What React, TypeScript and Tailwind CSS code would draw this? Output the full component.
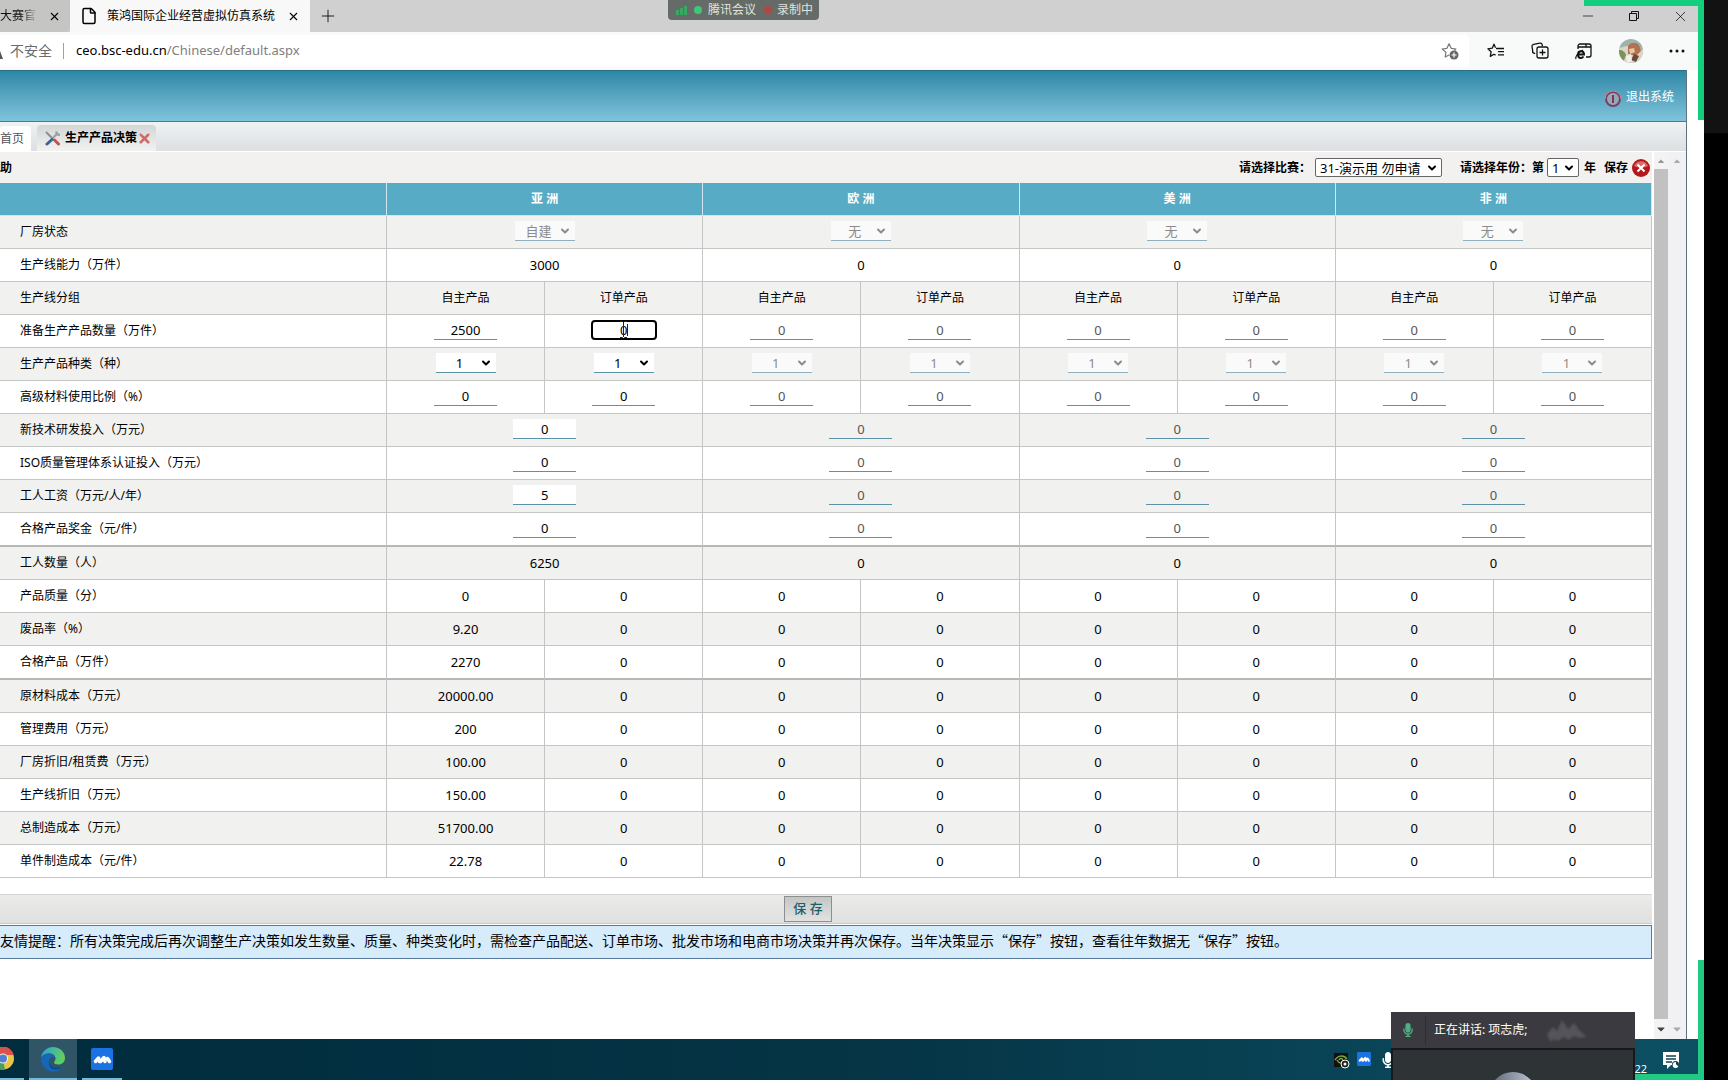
import React from "react"
import { ChevronDown, File, Minus, Plus, X } from "lucide-react"
import { FaCaretDown, FaCaretUp, FaMicrophone } from "react-icons/fa"

type Kind = "text" | "input" | "select"

interface Row {
  label: string
  kind: Kind
  values: string[]
  thick?: boolean
}

const regions = ["亚 洲", "欧 洲", "美 洲", "非 洲"]

const groups = ["自主产品", "订单产品"]

// only the first line of the first region is in use
const split = (first: string) => [first, "0", "0", "0", "0", "0", "0", "0"]

const rows: Row[] = [
  { label: "厂房状态", kind: "select", values: ["自建", "无", "无", "无"] },
  { label: "生产线能力（万件）", kind: "text", values: ["3000", "0", "0", "0"] },
  {
    label: "生产线分组",
    kind: "text",
    values: [...groups, ...groups, ...groups, ...groups],
  },
  { label: "准备生产产品数量（万件）", kind: "input", values: split("2500") },
  {
    label: "生产产品种类（种）",
    kind: "select",
    values: ["1", "1", "1", "1", "1", "1", "1", "1"],
  },
  { label: "高级材料使用比例（%）", kind: "input", values: split("0") },
  { label: "新技术研发投入（万元）", kind: "input", values: ["0", "0", "0", "0"] },
  {
    label: "ISO质量管理体系认证投入（万元）",
    kind: "input",
    values: ["0", "0", "0", "0"],
  },
  { label: "工人工资（万元/人/年）", kind: "input", values: ["5", "0", "0", "0"] },
  {
    label: "合格产品奖金（元/件）",
    kind: "input",
    values: ["0", "0", "0", "0"],
    thick: true,
  },
  { label: "工人数量（人）", kind: "text", values: ["6250", "0", "0", "0"] },
  { label: "产品质量（分）", kind: "text", values: split("0") },
  { label: "废品率（%）", kind: "text", values: split("9.20") },
  { label: "合格产品（万件）", kind: "text", values: split("2270"), thick: true },
  { label: "原材料成本（万元）", kind: "text", values: split("20000.00") },
  { label: "管理费用（万元）", kind: "text", values: split("200") },
  { label: "厂房折旧/租赁费（万元）", kind: "text", values: split("100.00") },
  { label: "生产线折旧（万元）", kind: "text", values: split("150.00") },
  { label: "总制造成本（万元）", kind: "text", values: split("51700.00") },
  { label: "单件制造成本（元/件）", kind: "text", values: split("22.78") },
]

const BrowserTabs = () => (
  <div className="flex h-8 items-stretch bg-[#cfd0cf]">
    <div className="flex w-[70px] items-center justify-between rounded-br bg-[#c5c6c4] pr-[9px]">
      <span className="bg-linear-to-r from-[#111] from-60% to-[#b4b4b4] bg-clip-text text-xs whitespace-nowrap text-transparent">
        大赛官
      </span>
      <button aria-label="关闭标签页">
        <X size={13} strokeWidth={2} />
      </button>
    </div>
    <div className="flex w-60 items-center bg-[#f7f8f7] pr-[10px] pl-[10px]">
      <File size={18} strokeWidth={2} />
      <span className="ml-[9px] grow text-xs whitespace-nowrap">
        策鸿国际企业经营虚拟仿真系统
      </span>
      <button aria-label="关闭标签页">
        <X size={13} strokeWidth={2} />
      </button>
    </div>
    <button aria-label="新建标签页" className="px-2">
      <Plus size={20} strokeWidth={1} />
    </button>
    <div className="ml-auto flex items-center gap-[30px] pr-[15px]">
      <button aria-label="最小化">
        <Minus size={16} strokeWidth={1} />
      </button>
      <button aria-label="还原">
        <svg width="16" height="16" viewBox="0 0 16 16" fill="none" stroke="#111">
          <path d="M3.5 5.5h7v7h-7zM5.5 5.5v-2h7v7h-2" />
        </svg>
      </button>
      <button aria-label="关闭">
        <X size={17} strokeWidth={1} />
      </button>
    </div>
  </div>
)

const BrowserActions = () => (
  <div className="flex items-center gap-[26px] pr-[19px] pl-[18px]">
    <button aria-label="收藏夹">
      <svg width="18" height="18" viewBox="0 0 18 18" fill="none" stroke="#111">
        <path
          strokeWidth="1.3"
          strokeLinejoin="round"
          d="M8.5 5.8 7 2.2 5.2 6.2.9 6.8l3.2 3-.8 4.6L7 12.2l1.6.9M9 6.5h8M11 9.7h6M11 12.9h6"
        />
      </svg>
    </button>
    <button aria-label="集锦">
      <svg width="18" height="18" viewBox="0 0 18 18" fill="none" stroke="#111">
        <path
          strokeWidth="1.3"
          d="M4.2 11.6 3 11.2a2 2 0 0 1-1.3-2.4L1 4.5a2 2 0 0 1 1.6-2.2L9 1.2a2 2 0 0 1 2.2 1.6l.2 1.4"
        />
        <rect x="6" y="5" width="11" height="11" rx="2" strokeWidth="1.3" />
        <path strokeWidth="1.3" d="M11.5 7.5v6M8.5 10.5h6" />
      </svg>
    </button>
    <button aria-label="Internet Explorer 模式">
      <svg width="18" height="18" viewBox="0 0 18 18" fill="none" stroke="#111">
        <path
          strokeWidth="1.3"
          d="M3 7V4a2 2 0 0 1 2-2h9a2 2 0 0 1 2 2v9a2 2 0 0 1-2 2h-3M3 5h13M11 2v3"
        />
        <path strokeWidth="2" d="M3 12.5h6c0-4.5-6-4.500-6 0s4 4 5.500 2" />
        <path strokeWidth="1.2" d="M1 17c-1-2 2-7 7-9" />
      </svg>
    </button>
    <button aria-label="个人资料" className="size-6 overflow-hidden rounded-full">
      <svg width="24" height="24" viewBox="0 0 24 24">
        <path fill="#9fb3ae" d="M0 0h24v24H0z" />
        <path fill="#d9d6c8" d="M0 9l8-2 6 3 10 1v13H0z" />
        <path fill="#7d9258" d="M0 11c4 0 6 2 7 5l-3 8H0z" />
        <path fill="#b5714d" d="M9 7c3-4 8-4 11-1l2 6-5 5-8-2z" />
        <path fill="#e7c6a4" d="M10 10l5-1 1 4-5 2z" />
        <path fill="#6b4a3c" d="M15 15l5 2-3 6-5-2z" />
        <path fill="#f1efe9" d="M7 17l5-2 1 7-5 2z" />
      </svg>
    </button>
    <button aria-label="设置及其他">
      <svg width="16" height="4" viewBox="0 0 16 4" fill="#111">
        <circle cx="2" cy="2" r="1.5" />
        <circle cx="8" cy="2" r="1.5" />
        <circle cx="14" cy="2" r="1.5" />
      </svg>
    </button>
  </div>
)

const AddressBar = () => (
  <div className="flex h-[38px] items-center bg-[#f8f9f9]">
    <div className="flex h-8 grow items-center rounded-r bg-white pr-[10px]">
      <svg width="3" height="8" viewBox="0 0 3 8" className="mt-2 mr-[7px]">
        <path fill="#555" d="M0 0l3 8H0z" />
      </svg>
      <span className="text-sm text-[#6b6b6b]">不安全</span>
      <span className="mr-3 ml-[11px] h-4 w-px bg-[#a0a0a0]" />
      <span className="grow text-[13px] text-black">
        ceo.bsc-edu.cn
        <span className="text-[#808080]">/Chinese/default.aspx</span>
      </span>
      <button aria-label="添加到收藏夹">
        <svg width="18" height="18" viewBox="0 0 18 18" fill="none" stroke="#777">
          <path
            strokeWidth="1.2"
            strokeLinejoin="round"
            d="M8 13 4.2 15l.7-4.6L1.2 7l4.7-.7L8 1.8l2.2 4.5 4.7.7-1.5 1.5"
          />
          <circle cx="13" cy="13" r="4.5" fill="#666" stroke="none" />
          <path stroke="#fff" strokeWidth="1.2" d="M13 10.5v5M10.5 13h5" />
        </svg>
      </button>
    </div>
    <BrowserActions />
  </div>
)

const SiteHeader = () => (
  <header className="flex h-[52px] items-center justify-end border-y border-t-[#2c6f85] border-b-[#4b7a8c] bg-linear-to-b from-[#2b88a6] to-[#80c4dc] pt-[2px] pr-3">
    <a href="#logout" className="flex items-center gap-1 text-xs text-white">
      <svg width="18" height="18" viewBox="0 0 18 18" fill="none" className="mt-[3px]">
        <circle cx="9" cy="9" r="7" fill="#8fa9bd" stroke="#7a3f63" strokeWidth="2" />
        <path stroke="#d8848f" d="M1 9a8 8 0 0 1 16 0" />
        <path stroke="#8a3350" strokeWidth="2" d="M9 5v8" />
      </svg>
      退出系统
    </a>
  </header>
)

const PageTabs = () => (
  <nav className="flex h-[30px] items-end border-b border-white bg-linear-to-b from-[#eff3f3] to-[#dddfe2] text-xs">
    <a
      href="#home"
      className="flex h-[25px] w-[31px] items-center rounded-t bg-white text-[#555]"
    >
      首页
    </a>
    <div className="ml-[6px] flex h-[26px] w-[119px] items-center rounded-t bg-linear-to-b from-[#d4d6d6] to-[#f1f2f1] pl-2">
      <svg width="16" height="16" viewBox="0 0 16 16" fill="none">
        <path stroke="#8a8f96" strokeWidth="2" d="M1 2l7 7" />
        <path stroke="#c94f4b" strokeWidth="3" strokeLinecap="round" d="M9.5 10l4 4" />
        <path stroke="#9aa0a8" strokeWidth="2" d="M13 2.5 8 8M11 1.5l1 3 3 .5" />
        <path stroke="#3d6390" strokeWidth="3" strokeLinecap="round" d="M7 9.5l-5 4.5" />
      </svg>
      <a href="#production" className="ml-1 font-bold text-black">
        生产产品决策
      </a>
      <button aria-label="关闭">
        <X size={15} strokeWidth={4} className="text-[#cf6a68]" />
      </button>
    </div>
  </nav>
)

const Toolbar = () => (
  <div className="flex h-[31px] items-center bg-[#f2f1ef] text-xs font-bold text-black">
    <span>助</span>
    <label htmlFor="match" className="ml-auto">
      请选择比赛：
    </label>
    <span className="relative ml-1">
      <select
        id="match"
        className="block h-[19px] w-[127px] appearance-none rounded-xs border border-[#666] bg-white pl-1 text-[13px] leading-4 font-normal"
      >
        <option>31-演示用 勿申请</option>
      </select>
      <ChevronDown
        size={12}
        strokeWidth={4}
        className="pointer-events-none absolute top-1 right-1"
      />
    </span>
    <label htmlFor="year" className="ml-[18px]">
      请选择年份：第
    </label>
    <span className="relative ml-[3px]">
      <select
        id="year"
        className="block h-[19px] w-8 appearance-none rounded-xs border border-[#666] bg-white pl-1 text-[13px] leading-4 font-normal"
      >
        <option>1</option>
      </select>
      <ChevronDown
        size={12}
        strokeWidth={4}
        className="pointer-events-none absolute top-1 right-1"
      />
    </span>
    <span className="ml-[5px]">年</span>
    <button className="ml-2 font-bold">保存</button>
    <button aria-label="关闭" className="mr-[2px] ml-1">
      <svg width="18" height="18" viewBox="0 0 18 18">
        <circle cx="9" cy="9" r="9" fill="#b3161b" />
        <path fill="#dd6a6a" d="M2 7a7.5 7.5 0 0 1 14 0c-4 2-10 2-14 0z" />
        <path stroke="#fff" strokeWidth="2" d="M5.5 5.5l7 7M12.5 5.5l-7 7" />
      </svg>
    </button>
  </div>
)

interface FieldProps {
  name: string
  value: string
  disabled: boolean
  focused?: boolean
}

const NumberField = ({ name, value, disabled, focused }: FieldProps) => {
  if (focused) {
    return (
      <span className="relative mx-auto block w-[66px]">
        <input
          aria-label={name}
          defaultValue={value}
          className="block h-5 w-full rounded border-2 border-black bg-white text-center text-[13px] outline-none"
        />
        <svg
          width="9"
          height="17"
          viewBox="0 0 9 17"
          fill="none"
          stroke="#222"
          className="pointer-events-none absolute top-px left-[28px]"
        >
          <path d="M1 .5h2.500l1 1 1-1H8M4.500 1v15M1 16.500h2.500l1-1 1 1H8M8.500 3v12" />
        </svg>
      </span>
    )
  }
  return (
    <input
      aria-label={name}
      defaultValue={value}
      disabled={disabled}
      className="mx-auto block h-5 w-[63px] border-b border-[#5c93a8] bg-white text-center text-[13px] text-black disabled:bg-transparent disabled:text-[#555]"
    />
  )
}

const SelectField = ({ name, value, disabled }: FieldProps) => (
  <span
    className={`relative mx-auto block w-[60px] ${
      disabled ? "text-[#8c8c8c]" : "text-black"
    }`}
  >
    <select
      aria-label={name}
      disabled={disabled}
      className="block h-5 w-full appearance-none border-b border-[#5c93a8] bg-white pr-3 text-center text-[13px] disabled:border-[#8fb0bf] disabled:bg-[#fafafa]"
    >
      <option>{value}</option>
    </select>
    <ChevronDown
      size={12}
      strokeWidth={4}
      className="pointer-events-none absolute top-1 right-1"
    />
  </span>
)

const Cell = ({ row, index }: { row: Row; index: number }) => {
  const value = row.values[index]
  const perRegion = row.values.length / regions.length
  const name = `${row.label} ${index + 1}`
  const inactive = index >= perRegion

  if (row.kind === "input") {
    return (
      <NumberField
        name={name}
        value={value}
        disabled={inactive}
        focused={index === 1 && row.label.startsWith("准备")}
      />
    )
  }
  if (row.kind === "select") {
    return (
      <SelectField
        name={name}
        value={value}
        disabled={inactive || perRegion === 1}
      />
    )
  }
  return <>{value}</>
}

const DecisionTable = () => (
  <table className="w-full table-fixed border-separate border-spacing-0 text-black">
    <colgroup>
      <col className="w-[387px]" />
      {regions.map((region) => (
        <React.Fragment key={region}>
          <col />
          <col />
        </React.Fragment>
      ))}
    </colgroup>
    <thead>
      <tr className="h-[33px] bg-[#58abc4] text-xs text-white">
        <td className="border-r border-b border-[#cfe6ee] p-0" />
        {regions.map((region) => (
          <th
            key={region}
            colSpan={2}
            className="border-r border-b border-[#cfe6ee] p-0 font-bold"
          >
            {region}
          </th>
        ))}
      </tr>
    </thead>
    <tbody>
      {rows.map((row) => {
        const border = row.thick
          ? "border-r border-b-2 border-r-[#c4c6c5] border-b-[#b4b8b6]"
          : "border-r border-b border-[#c4c6c5]"
        return (
          <tr
            key={row.label}
            className={`odd:bg-[#f1f1f0] even:bg-white ${
              row.thick ? "h-[34px]" : "h-[33px]"
            }`}
          >
            <th
              scope="row"
              className={`${border} p-0 pl-5 text-left text-xs font-normal`}
            >
              {row.label}
            </th>
            {row.values.map((value, i) => (
              <td
                key={i}
                colSpan={row.values.length === 4 ? 2 : 1}
                className={`${border} p-0 text-center leading-5 ${
                  row.kind === "text" ? "" : "pb-[2px]"
                } ${groups.includes(value) ? "text-xs" : "text-[13px]"}`}
              >
                <Cell row={row} index={i} />
              </td>
            ))}
          </tr>
        )
      })}
    </tbody>
  </table>
)

const ScrollBars = () => (
  <>
    <div className="ml-[2px] flex w-[14px] shrink-0 flex-col items-center bg-[#f3f3f4]">
      <FaCaretUp size={10} className="mt-1 mb-[3px] text-[#999]" />
      <div className="w-full grow bg-[#c1c1c1]" />
      <FaCaretDown size={12} className="my-1 text-[#444]" />
    </div>
    <div className="flex w-[18px] shrink-0 flex-col items-center justify-between bg-[#f1f1f3]">
      <FaCaretUp size={10} className="mt-1 text-[#aaa]" />
      <FaCaretDown size={12} className="mb-1 text-[#aaa]" />
    </div>
  </>
)

const MeetingLogo = ({ size }: { size: number }) => (
  <svg width={size} height={size} viewBox="0 0 22 22">
    <rect width="22" height="22" rx="2" fill="#1b72e2" />
    <path
      fill="none"
      stroke="#fff"
      strokeWidth="3.5"
      strokeLinecap="round"
      strokeLinejoin="round"
      d="M4.5 13.5l3-3.500 1 3.500M9.500 13.500l3.500-4 1 4M15.500 11l1-.500 2 3"
    />
  </svg>
)

const Taskbar = () => (
  <footer className="flex h-[41px] bg-linear-to-r from-[#012c3e] via-[#053445] to-[#0d5063]">
    <a
      href="#chrome"
      aria-label="Chrome"
      className="flex w-6 items-center overflow-hidden border-b-2 border-[#7cb8dc]"
    >
      <svg width="15" height="23" viewBox="9 0 15 23">
        <circle cx="12" cy="11.5" r="11" fill="#e8c547" />
        <path fill="#d9534a" d="M1 8a11 11 0 0 1 21.5 0H12z" />
        <path fill="#4a9e5c" d="M0 14l12-1 2 9.5A11 11 0 0 1 0 14z" />
        <circle cx="12" cy="11.5" r="5" fill="#f4f4f4" />
        <circle cx="12" cy="11.5" r="4" fill="#4f7fd0" />
      </svg>
    </a>
    <a
      href="#edge"
      aria-label="Edge"
      className="ml-[5px] flex w-12 items-center justify-center border-b-2 border-[#7cb8dc] bg-[#2f5567]"
    >
      <svg width="26" height="26" viewBox="0 0 26 26">
        <defs>
          <linearGradient id="edge-top" x1="0" x2="1" y1="0" y2="0.3">
            <stop offset="0" stopColor="#2a9fd8" />
            <stop offset="1" stopColor="#5fcf62" />
          </linearGradient>
        </defs>
        <path
          fill="url(#edge-top)"
          d="M1 12C2 5 7 1 13 1c7 0 12 5 12 11 0 4-3 6.5-6.5 6.5-3 0-4.5-1-4.5-2s1.5-1.5 1.5-4C15.5 9 12 7 8 7.5S2 10 1 12z"
        />
        <path
          fill="#1767b8"
          d="M1 12c1-3 4-4.5 7-4.5 4 0 7 2 7.5 5C13 9 9 11 9 15c0 4 4 7 8 7 3 0 5-1 6.5-2-2 3.5-6 5.5-10 5.5C6 25.5 1 20 1 12z"
        />
        <path fill="#0c4a8c" d="M9 15c0 4 4 7 8 7 2.5 0 4.5-.7 6-1.7-4 5.5-16 4.500-14-5.300z" />
      </svg>
    </a>
    <a
      href="#meeting"
      aria-label="腾讯会议"
      className="ml-[5px] flex w-10 items-center justify-center border-b-2 border-[#7cb8dc]"
    >
      <MeetingLogo size={22} />
    </a>
    <div className="mr-[6px] ml-auto flex w-[364px] items-start pt-[13px] text-white">
      <svg width="16" height="16" viewBox="0 0 16 16" className="mt-px">
        <path fill="#111" d="M0 0h14v14H0z" />
        <path
          fill="none"
          stroke="#7fa53c"
          strokeWidth="1.5"
          d="M1 7c3-5 9-5 12-1M3 7c2 4 6 4 8 1M5 7c1-2 3-2 4 0"
        />
        <circle cx="11" cy="11" r="4" fill="#222" stroke="#fff" />
        <circle cx="11" cy="11" r="1.5" fill="#fff" />
      </svg>
      <span className="ml-[7px]">
        <MeetingLogo size={14} />
      </span>
      <FaMicrophone size={16} className="ml-[9px]" />
      <span className="mt-[9px] ml-auto text-[11px] leading-4">22</span>
      <svg width="18" height="18" viewBox="0 0 18 18" className="mr-[18px] ml-[15px]">
        <path fill="#fff" d="M1 0h16v13H9l-4 4v-4H1z" />
        <path stroke="#123f4f" strokeWidth="1.5" d="M4 4h10M4 7h10M4 10h6" />
        <circle cx="13.5" cy="12.5" r="3.5" fill="#123f4f" />
        <path fill="#fff" d="M14 10a3 3 0 1 0 2.5 4 3 3 0 0 1-2.5-4z" />
      </svg>
    </div>
  </footer>
)

const MeetingStatus = () => (
  <div className="absolute top-0 left-[668px] flex h-5 w-[151px] items-center rounded-b bg-[#666b67] pl-2 text-xs text-[#dfe3df]">
    <svg width="12" height="9" viewBox="0 0 12 9" fill="#3aa864">
      <path d="M0 4h3v5H0zM4 2h3v7H4zM8 0h3v9H8z" />
    </svg>
    <span className="ml-[6px] size-2 rounded-full bg-[#3fc777]" />
    <span className="ml-[6px]">腾讯会议</span>
    <span className="ml-2 size-2 rounded-full bg-[#b04743]" />
    <span className="ml-[5px]">录制中</span>
  </div>
)

const SpeakerPanel = () => (
  <div className="absolute right-[93px] bottom-0 w-[244px] overflow-hidden text-xs text-white">
    <div className="flex h-9 items-center bg-[#3b3a40]">
      <span className="flex h-7 w-[35px] items-center justify-center border-r border-[#2e2d32]">
        <FaMicrophone size={14} className="text-[#4fae82]" />
      </span>
      <span className="ml-2">正在讲话: 项志虎;</span>
      <svg width="42" height="22" viewBox="0 0 42 22" className="ml-[18px] blur-[1px]">
        <path
          fill="#55545b"
          d="M1 15l6-7 4 4 5-11 6 9 6-6 5 7 8 7-8 1-5-2-5 4-5-3-6 4-4-2-4 3z"
        />
      </svg>
    </div>
    <div className="flex h-8 items-start justify-center overflow-hidden border-2 border-b-0 border-[#16181b] bg-[#2e3335] pt-[22px]">
      <div className="size-12 shrink-0 rounded-full bg-linear-to-r from-[#5c6678] to-[#c3cad6]" />
    </div>
  </div>
)

const ShareFrame = () => (
  <>
    <span className="absolute top-0 right-6 h-[6px] w-30 bg-[#13ce7c]" />
    <span className="absolute top-0 right-6 h-30 w-[6px] bg-[#13ce7c]" />
    <span className="absolute right-6 bottom-0 h-30 w-[6px] bg-[#22c983]" />
    <span className="absolute right-6 bottom-0 h-[6px] w-[69px] bg-[#22c983]" />
  </>
)

export default function App() {
  return (
    <div className="relative flex min-h-screen overflow-hidden bg-white font-['Noto_Sans','Noto_Sans_CJK_SC',sans-serif]">
      <div className="flex min-w-0 grow flex-col">
        <BrowserTabs />
        <AddressBar />
        <main className="mr-[17px] flex grow flex-col border-r border-[#5d7480]">
          <SiteHeader />
          <PageTabs />
          <div className="flex grow">
            <div className="min-w-0 grow">
              <Toolbar />
              <DecisionTable />
              <div className="mt-4 flex h-[30px] items-center justify-center border-y border-t-[#d4d6d4] border-b-[#c3cbd6] bg-linear-to-b from-[#ebebea] to-[#e0e1de]">
                <button className="mr-9 h-[26px] w-12 border border-[#8b8f8f] bg-linear-to-b from-[#c4c6c5] to-[#e2e3e1] text-[13px] font-medium text-[#1d5d68]">
                  保 存
                </button>
              </div>
              <p className="mt-px min-h-[34px] border border-l-0 border-[#57799c] bg-[#d6ecfa] pb-1 font-['Noto_Sans_CJK_SC',sans-serif] text-sm leading-7 text-black">
                友情提醒：所有决策完成后再次调整生产决策如发生数量、质量、种类变化时，需检查产品配送、订单市场、批发市场和电商市场决策并再次保存。当年决策显示“保存”按钮，查看往年数据无“保存”按钮。
              </p>
            </div>
            <ScrollBars />
          </div>
        </main>
        <Taskbar />
      </div>
      <div className="w-6 shrink-0 bg-linear-to-b from-[#121212] from-[133px] to-black to-[134px]" />
      <ShareFrame />
      <MeetingStatus />
      <SpeakerPanel />
    </div>
  )
}
